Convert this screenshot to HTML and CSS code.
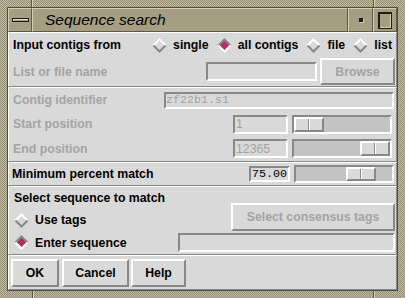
FILE: index.html
```html
<!DOCTYPE html>
<html>
<head>
<meta charset="utf-8">
<link rel="stylesheet" href="styles.css">
</head>
<body>
<div class="frame">
  <span class="mark mark-tl"></span><span class="mark mark-tr"></span>
  <span class="mark mark-bl"></span><span class="mark mark-br"></span>
  <div class="win">
    <div class="titlebar">
      <div class="tb-btn menu"><span class="menu-bar"></span></div>
      <div class="tb-title">Sequence search</div>
      <div class="tb-btn min"><span class="min-dot"></span></div>
      <div class="tb-btn max"><span class="max-box"></span></div>
    </div>
    <div class="content">
      <div class="sec sec-a">
        <div class="row r-input">
          <span class="lbl">Input contigs from</span>
          <div class="radios">
            <span class="radio"><svg class="dia" width="15" height="15" viewBox="0 0 15 15"><path class="lt" d="M1.5 7.5 7.5 1.5 13.5 7.5"/><path class="dk" d="M1.5 7.5 7.5 13.5 13.5 7.5"/></svg><span class="lbl">single</span></span>
            <span class="radio"><svg class="dia" width="15" height="15" viewBox="0 0 15 15"><path class="fill" d="M1.5 7.5 7.5 1.5 13.5 7.5 7.5 13.5Z"/><path class="dk" d="M1.5 7.5 7.5 1.5 13.5 7.5"/><path class="lt" d="M1.5 7.5 7.5 13.5 13.5 7.5"/></svg><span class="lbl">all contigs</span></span>
            <span class="radio"><svg class="dia" width="15" height="15" viewBox="0 0 15 15"><path class="lt" d="M1.5 7.5 7.5 1.5 13.5 7.5"/><path class="dk" d="M1.5 7.5 7.5 13.5 13.5 7.5"/></svg><span class="lbl">file</span></span>
            <span class="radio"><svg class="dia" width="15" height="15" viewBox="0 0 15 15"><path class="lt" d="M1.5 7.5 7.5 1.5 13.5 7.5"/><path class="dk" d="M1.5 7.5 7.5 13.5 13.5 7.5"/></svg><span class="lbl">list</span></span>
          </div>
        </div>
        <div class="row r-file">
          <span class="lbl dis">List or file name</span>
          <span class="entry e-file"></span>
          <span class="btn dis b-browse">Browse</span>
        </div>
      </div>
      <div class="sec sec-b">
        <div class="row r-contig">
          <span class="lbl dis">Contig identifier</span>
          <span class="entry e-contig mono dis">zf22b1.s1</span>
        </div>
        <div class="row r-pos">
          <span class="lbl dis">Start position</span>
          <span class="entry e-num dis">1</span>
          <span class="scale"><span class="slider"></span></span>
        </div>
        <div class="row r-pos r-end">
          <span class="lbl dis">End position</span>
          <span class="entry e-num dis">12365</span>
          <span class="scale scale-end"><span class="slider"></span></span>
        </div>
      </div>
      <div class="sec sec-c">
        <div class="row r-min">
          <span class="lbl">Minimum percent match</span>
          <span class="entry e-pct mono">75.00</span>
          <span class="scale scale-pct"><span class="slider" style="margin-left:50px"></span></span>
        </div>
      </div>
      <div class="sec sec-d">
        <span class="lbl d-title">Select sequence to match</span>
        <span class="radio d-use"><svg class="dia" width="15" height="15" viewBox="0 0 15 15"><path class="lt" d="M1.5 7.5 7.5 1.5 13.5 7.5"/><path class="dk" d="M1.5 7.5 7.5 13.5 13.5 7.5"/></svg><span class="lbl">Use tags</span></span>
        <span class="btn dis b-tags">Select consensus tags</span>
        <span class="radio d-enter"><svg class="dia" width="15" height="15" viewBox="0 0 15 15"><path class="fill" d="M1.5 7.5 7.5 1.5 13.5 7.5 7.5 13.5Z"/><path class="dk" d="M1.5 7.5 7.5 1.5 13.5 7.5"/><path class="lt" d="M1.5 7.5 7.5 13.5 13.5 7.5"/></svg><span class="lbl">Enter sequence</span></span>
        <span class="entry e-seq"></span>
      </div>
      <div class="sec sec-e">
        <span class="btn b-ok">OK</span>
        <span class="btn b-cancel">Cancel</span>
        <span class="btn b-help">Help</span>
      </div>
    </div>
  </div>
</div>
</body>
</html>
```

FILE: styles.css
```css
html, body {
  margin: 0;
  padding: 0;
  background: #aba48b;
}

.frame {
  position: relative;
  width: 405px;
  height: 298px;
  box-sizing: border-box;
  padding: 7px;
  background-color: #aba48b;
  background-image: repeating-conic-gradient(#c4bda3 0 25%, #938c74 0 50%);
  background-size: 2px 2px;
}

.mark {
  position: absolute;
  width: 1px;
  height: 7px;
  background: #5a5646;
  box-shadow: 1px 0 0 #d8d1b6;
}
.mark-tl { left: 31px; top: 0; }
.mark-tr { left: 373px; top: 0; }
.mark-bl { left: 32px; bottom: 0; }
.mark-br { left: 373px; bottom: 0; }

.win {
  height: 100%;
  box-sizing: border-box;
  border: 1px solid #4f4b3d;
  display: flex;
  flex-direction: column;
  background: #d9d9d9;
}

/* title bar */
.titlebar {
  height: 24px;
  flex: none;
  display: flex;
  background: #a59e82;
}
.tb-btn, .tb-title {
  box-sizing: border-box;
  border: 1px solid;
  border-color: #d6cfb4 #5e5947 #5e5947 #d6cfb4;
}
.menu {
  width: 24px;
  display: flex;
  align-items: center;
  justify-content: center;
}
.menu-bar {
  width: 17px;
  height: 4px;
  box-sizing: border-box;
  border: 1px solid #1e1c16;
  background: #a59e82;
  box-shadow: inset 1px 1px 0 #e6dfc6;
}
.tb-title {
  flex: 1;
  padding-left: 12px;
  font-family: "Liberation Sans", Arial, sans-serif;
  font-style: italic;
  font-size: 15.5px;
  line-height: 21px;
  color: #000;
}
.min {
  width: 25px;
  display: flex;
  align-items: center;
  justify-content: center;
}
.min-dot {
  width: 4px;
  height: 4px;
  background: #1e1c16;
  box-shadow: 1px 1px 0 #d6cfb4;
}
.max {
  width: 24px;
  display: flex;
  align-items: center;
  justify-content: center;
}
.max-box {
  width: 14px;
  height: 17px;
  box-sizing: border-box;
  border: 1px solid #1e1c16;
  border-top-width: 2px;
  border-left-width: 2px;
  box-shadow: inset -1px -1px 0 #d6cfb4;
}

/* content */
.content {
  flex: 1;
  display: flex;
  flex-direction: column;
  font-family: "Liberation Sans", Arial, sans-serif;
  font-size: 12.3px;
  color: #000;
}
.sec {
  box-sizing: border-box;
  border: 1px solid;
  border-color: #fff #888 #888 #fff;
}
.sec-a { height: 55px; }
.sec-b { height: 75px; }
.sec-c { height: 24px; }
.sec-d { height: 69px; }
.sec-e { height: 35px; }

.row {
  display: flex;
  align-items: center;
  padding-left: 4px;
}
.lbl {
  font-weight: bold;
  white-space: nowrap;
}
.dis { color: #a3a3a3; }
.mono {
  font-family: "Liberation Mono", "Courier New", monospace;
  font-weight: normal;
}

.r-input { height: 24px; padding-right: 4px; }
.radios {
  margin-left: auto;
  display: flex;
  align-items: center;
  gap: 8px;
}
.radio {
  display: flex;
  align-items: center;
  gap: 6px;
}
.dia { display: block; flex: none; }
.dia path { fill: none; stroke-width: 2; }
.dia .lt { stroke: #fff; }
.dia .dk { stroke: #888; }
.dia .fill { fill: #b03060; stroke: none; }

.r-file { height: 29px; padding-right: 1px; }

.entry {
  box-sizing: border-box;
  border: 2px solid;
  border-color: #888 #fff #fff #888;
  background: #d9d9d9;
  display: flex;
  align-items: center;
  white-space: nowrap;
  overflow: hidden;
}
.e-file {
  margin-left: auto;
  width: 111px;
  height: 19px;
}
.btn {
  box-sizing: border-box;
  border: 2px solid;
  border-color: #fff #888 #888 #fff;
  display: flex;
  align-items: center;
  justify-content: center;
  font-weight: bold;
  white-space: nowrap;
}
.b-browse {
  margin-left: 3px;
  width: 75px;
  height: 27px;
}

.r-contig { height: 24px; padding-right: 2px; }
.e-contig {
  margin-left: auto;
  width: 230px;
  height: 17px;
  font-size: 11.7px;
  padding-left: 0;
}
.r-pos { height: 24px; padding-right: 4px; }
.r-end { height: 25px; }
.e-num {
  margin-left: auto;
  width: 55px;
  height: 19px;
  padding-left: 1px;
  font-weight: normal;
}
.scale {
  margin-left: 4px;
  width: 100px;
  height: 19px;
  box-sizing: border-box;
  border: 2px solid;
  border-color: #888 #fff #fff #888;
  background: #c3c3c3;
  display: flex;
}
.scale-end { justify-content: flex-end; }
.slider {
  width: 30px;
  height: 100%;
  box-sizing: border-box;
  border: 2px solid;
  border-color: #fff #888 #888 #fff;
  background: #d9d9d9;
  position: relative;
}
.slider::after {
  content: "";
  position: absolute;
  left: 12px;
  top: 0;
  bottom: 0;
  width: 1px;
  background: #888;
  box-shadow: 1px 0 0 #fff;
}

.r-min { height: 22px; padding-left: 3px; padding-right: 2px; }
.e-pct {
  margin-left: auto;
  width: 41px;
  height: 16px;
  font-size: 11.7px;
  padding-left: 1px;
}
.scale-pct {
  margin-left: 4px;
  height: 18px;
}

.sec-d {
  display: grid;
  grid-template-columns: auto 1fr;
  grid-template-rows: 22px 22px 23px;
  padding: 0 1px 0 4px;
}
.d-title { grid-column: 1; grid-row: 1; align-self: center; padding-left: 1px; }
.d-use { grid-column: 1; grid-row: 2; align-self: center; padding-left: 1px; }
.d-enter { grid-column: 1; grid-row: 3; align-self: center; padding-left: 1px; }
.b-tags {
  grid-column: 2;
  grid-row: 1 / span 2;
  align-self: end;
  justify-self: end;
  width: 164px;
  height: 28px;
}
.e-seq {
  grid-column: 2;
  grid-row: 3;
  align-self: center;
  justify-self: end;
  width: 217px;
  height: 19px;
}

.sec-e {
  display: flex;
  align-items: center;
  padding-left: 2px;
  gap: 2px;
}
.b-ok { width: 48px; height: 28px; margin-right: 1px; }
.b-cancel { width: 67px; height: 28px; }
.b-help { width: 55px; height: 28px; }
```
